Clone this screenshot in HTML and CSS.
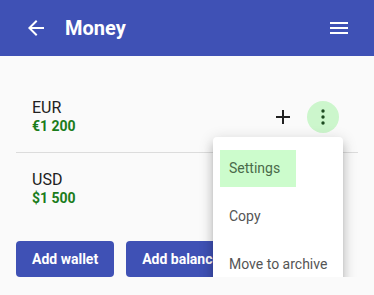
FILE: index.html
```html
<!DOCTYPE html>
<html lang="en">
<head>
    <meta charset="UTF-8">
    <meta name="viewport" content="width=device-width, initial-scale=1.0">
    <title>Money</title>
    <link rel="stylesheet" href="styles.css">
</head>
<body>
    <header class="toolbar">
        <button class="icon-button" aria-label="Back">
            <svg viewBox="0 0 24 24" width="24" height="24"><path d="M20 11H7.83l5.59-5.59L12 4l-8 8 8 8 1.41-1.41L7.83 13H20v-2z"/></svg>
        </button>
        <h1 class="title">Money</h1>
        <button class="icon-button menu-toggle" aria-label="Menu">
            <svg viewBox="0 0 24 24" width="24" height="24"><path d="M3 18h18v-2H3v2zm0-5h18v-2H3v2zm0-7v2h18V6H3z"/></svg>
        </button>
    </header>

    <main class="content">
        <ul class="wallets">
            <li class="wallet">
                <div class="wallet-info">
                    <div class="currency">EUR</div>
                    <div class="amount">€1 200</div>
                </div>
                <div class="wallet-actions">
                    <button class="icon-button add" aria-label="Add">
                        <svg viewBox="0 0 24 24" width="24" height="24"><path d="M19 13h-6v6h-2v-6H5v-2h6V5h2v6h6v2z"/></svg>
                    </button>
                    <button class="more active" aria-label="More">
                        <svg viewBox="0 0 24 24" width="24" height="24">
                            <circle cx="12" cy="6" r="1.7"/>
                            <circle cx="12" cy="12" r="1.7"/>
                            <circle cx="12" cy="18" r="1.7"/>
                        </svg>
                    </button>

                    <!-- open context menu -->
                    <div class="dropdown">
                        <div class="dropdown-item"><span class="focused">Settings</span></div>
                        <div class="dropdown-item"><span>Copy</span></div>
                        <div class="dropdown-item"><span>Move to archive</span></div>
                    </div>
                </div>
            </li>
            <li class="wallet">
                <div class="wallet-info">
                    <div class="currency">USD</div>
                    <div class="amount">$1 500</div>
                </div>
            </li>
        </ul>

        <div class="buttons">
            <button class="primary-button">Add wallet</button>
            <button class="primary-button">Add balance</button>
        </div>
    </main>
</body>
</html>
```

FILE: styles.css
```css
* {
    margin: 0;
    padding: 0;
    box-sizing: border-box;
    font-family: Roboto, 'Liberation Sans', sans-serif;
}

body {
    background: #fafafa;
    color: #212121;
    overflow: hidden;
}

button {
    border: none;
    background: none;
    cursor: pointer;
}

.toolbar {
    display: flex;
    align-items: center;
    height: 56px;
    padding: 0 23px 0 24px;
    background-color: #3f51b5;
    color: #fff;
}

.icon-button {
    display: flex;
    width: 24px;
    height: 24px;
}

.toolbar .icon-button svg {
    fill: #fff;
}

.title {
    margin-left: 17px;
    font-size: 20px;
    font-weight: 700;
    flex: 1;
}

.content {
    padding: 25px 16px 0;
}

.wallets {
    list-style: none;
}

.wallet {
    display: flex;
    align-items: center;
    justify-content: space-between;
    padding: 17px 19px 17px 16px;
}

.wallet:not(:last-child) {
    border-bottom: 1px solid #dcdcdc;
}

.currency {
    font-size: 16px;
    line-height: 20px;
}

.amount {
    font-size: 14px;
    line-height: 17px;
    font-weight: 700;
    color: #1b7d1b;
}

.wallet-actions {
    position: relative;
    display: flex;
    align-items: center;
    gap: 12px;
}

.add svg {
    fill: #212121;
}

.more {
    display: flex;
    align-items: center;
    justify-content: center;
    width: 32px;
    height: 32px;
    border-radius: 50%;
}

.more svg {
    fill: #1c4a1f;
}

.more.active {
    background: #ccf6cc;
}

.dropdown {
    position: absolute;
    top: calc(100% + 4px);
    right: -4px;
    width: 130px;
    padding: 8px 0;
    background: #fff;
    border-radius: 4px;
    z-index: 5;
    box-shadow: 0 5px 5px -3px rgba(0, 0, 0, 0.2),
                0 8px 10px 1px rgba(0, 0, 0, 0.14),
                0 3px 14px 2px rgba(0, 0, 0, 0.12);
}

.dropdown-item {
    display: flex;
    align-items: center;
    height: 48px;
    padding-left: 7px;
    font-size: 14px;
    color: #555;
    white-space: nowrap;
}

.dropdown-item span {
    line-height: 17px;
    padding: 10px 16px 10px 9px;
}

.dropdown-item .focused {
    background: #ccfccc;
    color: #4a6a4a;
}

.buttons {
    display: flex;
    gap: 12px;
    margin-top: 17px;
}

.primary-button {
    height: 36px;
    padding: 0 16px;
    background: #3f51b5;
    color: #fff;
    font-size: 14px;
    font-weight: 700;
    border-radius: 4px;
}
```
